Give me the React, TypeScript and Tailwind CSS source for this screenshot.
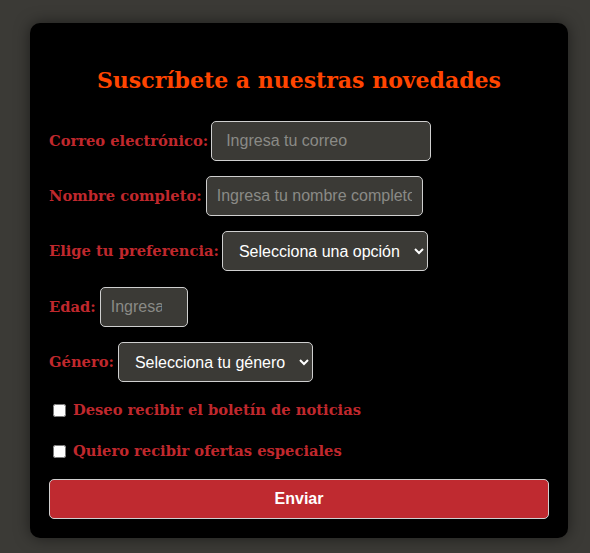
import React from "react";

const labelCls = "font-['DejaVu_Serif',serif] font-bold text-[14.7px] text-[#c0282d] whitespace-nowrap";
const fieldCls =
  "h-10 rounded-[5px] border border-[#cfcfcf] bg-[#3b3a36] px-[10px] text-[16px] text-white font-['Liberation_Sans',Arial,sans-serif] placeholder:text-[#8a8a86] outline-none";

export default function App() {
  return (
    <div className="min-h-[553px] bg-[#3b3a36] pt-[23px]">
      <div className="ml-[30px] w-[538px] rounded-[10px] bg-black px-[19px] pt-[43px] pb-[19px] shadow-[0_0_15px_rgba(0,0,0,0.5)]">
        <h2 className="text-center font-['DejaVu_Serif',serif] font-bold text-[22px] leading-[28px] text-[#ff4500]">
          Suscríbete a nuestras novedades
        </h2>

        <form className="mt-[27px]" onSubmit={(e) => e.preventDefault()}>
          <div className="mb-[15px] flex items-center gap-[3px]">
            <label className={labelCls}>Correo electrónico:</label>
            <input type="email" placeholder="Ingresa tu correo" className={`${fieldCls} w-[220px] pl-[14px]`} />
          </div>

          <div className="mb-[15px] flex items-center gap-[4px]">
            <label className={labelCls}>Nombre completo:</label>
            <input type="text" placeholder="Ingresa tu nombre completo" className={`${fieldCls} w-[217px]`} />
          </div>

          <div className="mb-[16px] flex items-center gap-[3px]">
            <label className={labelCls}>Elige tu preferencia:</label>
            <select className={`${fieldCls} w-[206px] pl-[12px] pr-[6px]`} defaultValue="">
              <option value="">Selecciona una opción</option>
              <option value="tec">Tecnología</option>
              <option value="dep">Deportes</option>
            </select>
          </div>

          <div className="mb-[15px] flex items-center gap-[4px]">
            <label className={labelCls}>Edad:</label>
            <input type="number" placeholder="Ingresa tu edad" className={`${fieldCls} w-[88px]`} />
          </div>

          <div className="flex items-center gap-[4px]">
            <label className={labelCls}>Género:</label>
            <select className={`${fieldCls} w-[195px] pl-[12px] pr-[6px]`} defaultValue="">
              <option value="">Selecciona tu género</option>
              <option value="f">Femenino</option>
              <option value="m">Masculino</option>
            </select>
          </div>

          <div className="mt-[18px] flex h-5 items-center pl-1">
            <input type="checkbox" className="m-0 h-[13px] w-[13px]" />
            <label className={`${labelCls} ml-[7px]`}>Deseo recibir el boletín de noticias</label>
          </div>

          <div className="mt-[21px] flex h-5 items-center pl-1">
            <input type="checkbox" className="m-0 h-[13px] w-[13px]" />
            <label className={`${labelCls} ml-[7px]`}>Quiero recibir ofertas especiales</label>
          </div>

          <button
            type="submit"
            className="mt-[18px] h-10 w-full rounded-[5px] border border-[#cfcfcf] bg-[#bf2a30] font-['Liberation_Sans',Arial,sans-serif] text-[16px] font-bold text-white"
          >
            Enviar
          </button>
        </form>
      </div>
    </div>
  );
}
